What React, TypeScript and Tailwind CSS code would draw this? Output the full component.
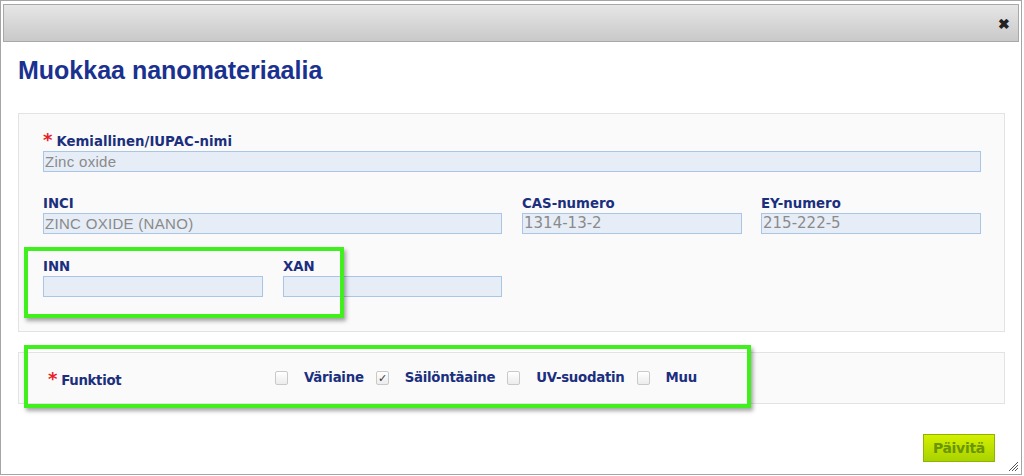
import React from "react";

const labelCls =
  "block text-[13.3px] font-bold text-[#1b2f7e] leading-[16px] [font-family:'DejaVu_Sans',Verdana,sans-serif]";
const inputCls =
  "h-[21px] border border-[#a9c6e6] bg-[#e6edf7] px-[1px] leading-[19px] text-[#8a8a8a] whitespace-nowrap overflow-hidden";

function Field({
  label,
  value,
  width,
  required,
  mono,
}: {
  label: string;
  value?: string;
  width: string;
  required?: boolean;
  mono?: boolean;
}) {
  return (
    <div className={width}>
      <span className={`${labelCls} h-[16px]`}>
        {required && <span className="text-[#e8202a] mr-[4px] text-[18px] leading-[10px]">*</span>}
        {label}
      </span>
      <div
        className={`${inputCls} mt-[1px] ${
          mono
            ? "[font-family:'DejaVu_Sans',Verdana,sans-serif] text-[15px]"
            : "[font-family:'Liberation_Sans',Arial,sans-serif] text-[15px] tracking-[0.3px]"
        }`}
      >
        {value}
      </div>
    </div>
  );
}

function Check({ checked }: { checked?: boolean }) {
  return (
    <span className="w-[13px] h-[14px] rounded-[2px] border border-[#c9c9c9] bg-gradient-to-b from-white to-[#ececec] flex items-center justify-center text-[11px] leading-none text-[#333]">
      {checked ? "✓" : ""}
    </span>
  );
}

const funcs = [
  { label: "Väriaine", checked: false },
  { label: "Säilöntäaine", checked: true },
  { label: "UV-suodatin", checked: false },
  { label: "Muu", checked: false },
];

export default function App() {
  return (
    <div className="relative w-[1024px] h-[476px] bg-white overflow-hidden [font-family:'Liberation_Sans',Arial,sans-serif]">
      <div className="w-[1022px] h-[475px] border border-[#a5a5a5] pt-[3px] px-[2px] flex flex-col">
        {/* title bar */}
        <div className="h-[38px] border border-[#a8a8a8] bg-gradient-to-b from-[#e6e6e6] to-[#c9c9c9] flex items-center justify-end pr-[8px] pt-[2px]">
          <span className="text-[14px] font-bold text-[#222] leading-none">✖</span>
        </div>

        <div className="pl-[15px] pr-[14px]">
          <h1 className="mt-[13px] text-[25px] font-bold text-[#1b3190] leading-[30px]">
            Muokkaa nanomateriaalia
          </h1>

          {/* panel 1 */}
          <div className="mt-[28px] h-[219px] border border-[#e3e3e3] bg-[#fafafa] pl-[24px] pt-[20px]">
            <Field label="Kemiallinen/IUPAC-nimi" value="Zinc oxide" width="w-[938px]" required />
            <div className="flex mt-[24px]">
              <Field label="INCI" value="ZINC OXIDE (NANO)" width="w-[459px]" />
              <div className="w-[20px]" />
              <Field label="CAS-numero" value="1314-13-2" width="w-[220px]" mono />
              <div className="w-[19px]" />
              <Field label="EY-numero" value="215-222-5" width="w-[220px]" mono />
            </div>
            <div className="flex mt-[25px]">
              <Field label="INN" width="w-[220px]" />
              <div className="w-[20px]" />
              <Field label="XAN" width="w-[219px]" />
            </div>
          </div>

          {/* panel 2 */}
          <div className="mt-[20px] h-[52px] border border-[#e3e3e3] bg-[#fafafa] flex items-center pl-[29px]">
            <span className={`${labelCls} w-[227px] tracking-[-0.3px] pt-[4px]`}>
              <span className="text-[#e8202a] mr-[4px] text-[18px]">*</span>
              Funktiot
            </span>
            <div className="flex items-center">
              {funcs.map((f) => (
                <div key={f.label} className="flex items-center">
                  <Check checked={f.checked} />
                  <span className={`${labelCls} tracking-[-0.25px] ml-[16px] mr-[12px]`}>
                    {f.label}
                  </span>
                </div>
              ))}
            </div>
          </div>

          {/* footer */}
          <div className="flex justify-end mt-[30px] pr-[10px]">
            <button className="h-[28px] px-[9px] border border-[#8cb400] bg-gradient-to-b from-[#d4f000] to-[#a9d200] text-[14px] font-bold text-[#6a9400] [font-family:'DejaVu_Sans',Verdana,sans-serif] tracking-[-0.3px]">
              Päivitä
            </button>
          </div>
        </div>
      </div>

      {/* resize grip */}
      <svg className="absolute right-[5px] bottom-[4px]" width="11" height="11" viewBox="0 0 11 11">
        <path d="M1 10L10 1M4 10L10 4M7 10L10 7" stroke="#555" strokeWidth="1" />
      </svg>

      {/* highlight annotations */}
      <div className="absolute left-[24px] top-[247px] w-[320px] h-[71px] border-[4px] border-[#3ff01c] shadow-[2px_3px_4px_rgba(0,0,0,0.35)]" />
      <div className="absolute left-[24px] top-[345px] w-[727px] h-[63px] border-[4px] border-[#3ff01c] shadow-[2px_3px_4px_rgba(0,0,0,0.35)]" />
    </div>
  );
}
